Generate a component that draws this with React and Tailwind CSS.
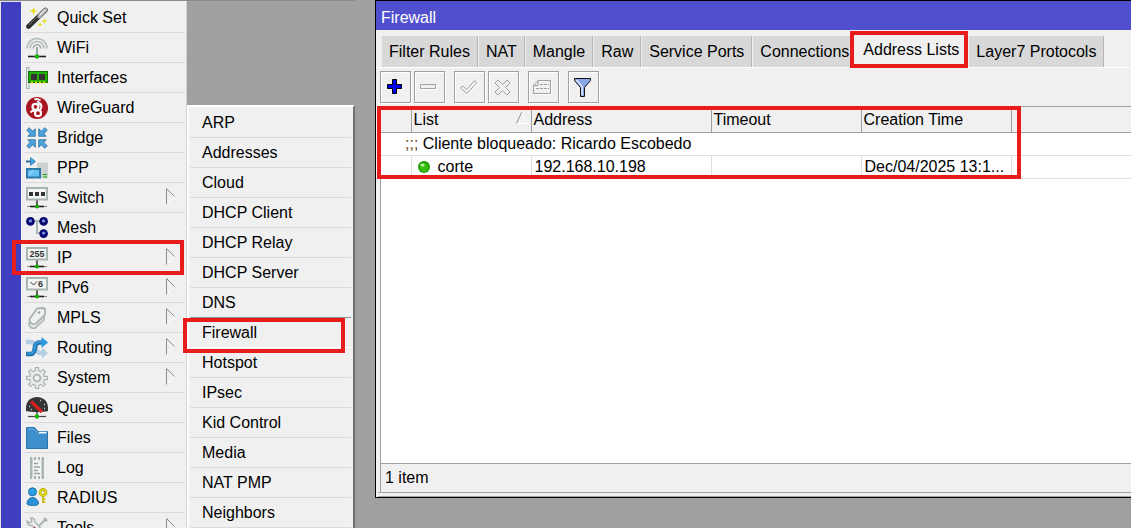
/**
 * RouterOS style desktop: main menu, IP submenu and the Firewall window
 */

import React, { useState } from 'react';

const Icon = ({ children, className = 'h-[22px] w-[22px]' }) => (
  <svg viewBox="0 0 22 22" className={`shrink-0 ${className}`} fill="none" aria-hidden="true">
    {children}
  </svg>
);

// Network plug drawn below several of the icons
const Plug = () => (
  <>
    <path d="M11 13v6" stroke="#222" strokeWidth="1.4" />
    <path d="M1 19.5h20" stroke="#888" strokeWidth="1" />
    <path d="M4 19.5h14" stroke="#222" strokeWidth="1.6" />
    <circle cx="11" cy="19.5" r="2.1" fill="#18a800" />
  </>
);

const Screen = ({ children }) => (
  <Icon>
    <Plug />
    <rect x="1" y="1" width="20" height="11.5" fill="#f4f6f6" stroke="#a8b4b2" strokeWidth="2" />
    {children}
  </Icon>
);

const QuickSetIcon = () => (
  <Icon>
    <path d="M2.5 19.5 19.5 3" stroke="#2b2b2b" strokeWidth="4.6" strokeLinecap="round" />
    <path d="M13 9.5 19.5 3" stroke="#b8b8b8" strokeWidth="3.6" strokeLinecap="round" />
    <path d="M3 18 12.5 8.8" stroke="#777" strokeWidth="1" />
    <path d="M13.5 8 19 2.6" stroke="#f0f0f0" strokeWidth="1.2" />
    <path d="m7.5 0 1.1 3 3 1-3 1.1-1.1 3-1.1-3-3-1.1 3-1z" fill="#e6dc12" />
    <path d="m18.5 11 .8 2.2 2.2.8-2.2.8-.8 2.2-.8-2.2-2.2-.8 2.2-.8z" fill="#e6dc12" />
    <path d="m14 15 .7 1.9 1.9.7-1.9.7-.7 1.9-.7-1.9-1.9-.7 1.9-.7z" fill="#e6dc12" />
  </Icon>
);

const WifiIcon = () => (
  <Icon>
    <path d="M1 11.5a10 10 0 1 1 20 0" stroke="#b4bfbd" strokeWidth="1.6" />
    <path d="M4 11.5a7 7 0 1 1 14 0" stroke="#b4bfbd" strokeWidth="1.6" />
    <path d="M7.2 11.5a3.8 3.8 0 1 1 7.6 0" stroke="#9facaa" strokeWidth="1.6" />
    <path d="M11 10v9" stroke="#9aa8a5" strokeWidth="2" />
    <path d="M2 19.5h18" stroke="#222" strokeWidth="1.6" />
    <circle cx="11" cy="19.5" r="2.2" fill="#18b400" />
  </Icon>
);

const InterfacesIcon = () => (
  <Icon>
    <rect x=".5" y=".5" width="2.6" height="21" fill="#e3e8e7" stroke="#a8b4b2" />
    <rect x="2.5" y="4.5" width="19" height="11" fill="#20b000" stroke="#157000" />
    <rect x="5" y="7" width="6" height="6" fill="#333" />
    <rect x="13" y="7" width="6" height="6" fill="#333" />
    <path d="M5 15.5h15" stroke="#e8dc10" strokeWidth="2" strokeDasharray="2 2" />
  </Icon>
);

const WireGuardIcon = () => (
  <Icon>
    <circle cx="11" cy="11" r="11" fill="#a81420" />
    <path d="M8.5 2.5c2.5-1.3 4.500 0 6 1M11 4.500c2 .5 3 2 1.500 3.300" stroke="#fff" strokeWidth="2" />
    <circle cx="9.500" cy="9.800" r="3" stroke="#fff" strokeWidth="2.2" />
    <circle cx="12" cy="16.200" r="3" stroke="#fff" strokeWidth="2.2" />
    <path d="M13 6c3.500 1.500 3 6 0 7.500M4.500 15.500c1-1.500 3-2 5-1.500" stroke="#fff" strokeWidth="2" />
  </Icon>
);

const BridgeIcon = () => (
  <Icon>
    {[0, 90, 180, 270].map((angle) => (
      <path
        key={angle}
        transform={`rotate(${angle} 11 11)`}
        d="M.7 3.2 3.2.7l3.3 3.4L9.3 1.8V9.3H1.8l2.4-2.8z"
        fill="#4aa3dc"
        stroke="#2a6f9e"
        strokeWidth=".8"
      />
    ))}
  </Icon>
);

const PppIcon = () => (
  <Icon>
    <path d="M11 5.5h11v16H15V11h-4z" fill="#ccd2d1" />
    <path d="M17 17.5h4M17 20h4" stroke="#18a800" />
    <path d="M0 4.5h6" stroke="#2f6a94" strokeWidth="2" />
    <path d="M4.500.5 9.500 4.500l-5 4z" fill="#35a4e8" stroke="#2f6a94" strokeWidth=".6" />
    <rect x="1" y="12" width="13" height="8.500" fill="#64c0f2" stroke="#2d78aa" strokeWidth="2" />
    <path d="M2.500 18 8 13" stroke="#93d6f8" strokeWidth="1.500" />
  </Icon>
);

const SwitchIcon = () => (
  <Screen>
    <path d="M3 5h4v4H3zM9 5h4v4H9zM15 5h4v4h-4z" fill="#333" />
  </Screen>
);

const MeshIcon = () => (
  <Icon>
    <path d="M4 4h13M11 4v12h6" stroke="#a8b8b6" strokeWidth="2" />
    {[[4.4, 4.4], [17.6, 4.4], [17.6, 16.6]].map(([cx, cy]) => (
      <g key={`${cx}-${cy}`}>
        <circle cx={cx} cy={cy} r="4.3" fill="#050570" />
        <circle cx={cx} cy={cy - 0.5} r="1.7" fill="#7a8ee0" />
      </g>
    ))}
  </Icon>
);

const IpIcon = () => (
  <Screen>
    <text x="11" y="10" textAnchor="middle" fontSize="9" fontWeight="700" fontFamily="Liberation Sans, sans-serif" fill="#333">255</text>
  </Screen>
);

const Ipv6Icon = () => (
  <Screen>
    <path d="m4.500 5 3 3 3.500-3.500" stroke="#333" />
    <text x="14.500" y="10" textAnchor="middle" fontSize="9" fontWeight="700" fontFamily="Liberation Sans, sans-serif" fill="#333">6</text>
  </Screen>
);

const MplsIcon = () => (
  <Icon>
    <path d="m4 14-1 3c0 3 3 5 6 4l9-8V9" fill="#e4e8e7" stroke="#a8b4b2" strokeWidth="1.6" />
    <path d="M11 1.5 17.5 1l1.5 1v6l-9 8.500c-4 2-7-1-6.500-4.500z" fill="#eef1f0" stroke="#a8b4b2" strokeWidth="1.8" />
    <circle cx="13" cy="5.500" r="1.300" fill="#98a6a3" />
    <path d="M11.500 15 15 11.500" stroke="#a8b4b2" />
  </Icon>
);

const RoutingIcon = () => (
  <Icon>
    <path d="M0 5h5.500c5 0 3 11 8.500 11h3" stroke="#b4cfe4" strokeWidth="4.400" />
    <path d="m16 10.500 6 5.500-6 5.500z" fill="#b4cfe4" />
    <path d="M0 17h5C11 17 6.500 5.500 13 5.500h4" stroke="#1f6ea8" strokeWidth="4.600" />
    <path d="M1 16.500h4C10.500 16.500 6.500 5 13 5h3" stroke="#379ada" strokeWidth="2.200" />
    <path d="m15.500 0 6.500 5.500-6.500 5.500z" fill="#2b9ce0" />
  </Icon>
);

const SystemIcon = () => (
  <Icon>
    {[0, 45, 90, 135].map((angle) => (
      <path key={angle} transform={`rotate(${angle} 11 11)`} d="M11 0v22" stroke="#a8b4b2" strokeWidth="4.400" />
    ))}
    <circle cx="11" cy="11" r="7.500" fill="#e9eceb" stroke="#a8b4b2" strokeWidth="1.200" />
    {[0, 45, 90, 135].map((angle) => (
      <path key={angle} transform={`rotate(${angle} 11 11)`} d="M11 1.200v19.600" stroke="#e9eceb" strokeWidth="2.200" />
    ))}
    <circle cx="11" cy="11" r="3.400" fill="#f0f0f0" stroke="#a8b4b2" strokeWidth="1.800" />
  </Icon>
);

const QueuesIcon = () => (
  <Icon>
    <path d="M11 13v6" stroke="#555" strokeWidth="1.500" />
    <path d="M2 19.500h18" stroke="#444" strokeWidth="1.200" />
    <path d="M0 14C-1 5 4 0 11 0s12 5 11 14c-5 1.500-17 1.500-22 0z" fill="#353535" />
    <path d="M3 9.500h1M6 4.500h1M14 3.500h1M18 7.500h1M18 11.500h1M5 12.500h1" stroke="#c8c8c8" strokeWidth="1.500" />
    <path d="M5 4.500 16 15" stroke="#d82020" strokeWidth="3.200" />
    <circle cx="11" cy="19.500" r="2.200" fill="#18b400" />
  </Icon>
);

const FilesIcon = () => (
  <Icon>
    <path d="M.5.500h8L12 4.500h9.500v17H.500z" fill="#3d8ecb" stroke="#2b74aa" />
    <path d="M2 2h6l4 4.500h8.500" stroke="#66aee0" />
    <path d="M13 5.500h7.500" stroke="#fff" strokeWidth="1.500" />
  </Icon>
);

const LogIcon = () => (
  <Icon>
    <path d="M5.500 1.500v19h11v-19" fill="#f2f4f4" />
    <path d="M5.300 1v20M16.700 1v20" stroke="#a8b4b2" strokeWidth="2.400" />
    <path d="M4 1.500h14M4 20.500h14" stroke="#a8b4b2" strokeWidth="3" strokeDasharray="2 2" />
    <path d="M8 6.500h4M8 10h6M8 13.500h4M8 16.500h6" stroke="#98a6a3" strokeWidth="1.500" />
  </Icon>
);

const RadiusIcon = () => (
  <Icon>
    <circle cx="6.500" cy="4.800" r="4" fill="#2ca0e4" stroke="#1d6ea5" />
    <path d="M1 17c0-4 2.500-6.500 5.500-6.500s6 2.500 6 6.500c-2 2-9.500 2-11.500 0z" fill="#2b93d6" stroke="#1d6ea5" />
    <circle cx="17" cy="5.500" r="3" stroke="#b8aa00" strokeWidth="2.800" />
    <circle cx="17" cy="5.500" r="3" stroke="#eadf20" strokeWidth="1.200" />
    <path d="M17 9v7M17 12h2.500M17 15h2.500" stroke="#c8ba00" strokeWidth="1.700" />
  </Icon>
);

const ToolsIcon = () => (
  <Icon>
    <path d="M20 2 9 13M2 20l9-9" stroke="#a8b4b2" strokeWidth="2" />
    <path d="m18 1 3 3" stroke="#a8b4b2" strokeWidth="2.500" />
    <path d="M5 1c2 0 4 1 4 4l11 12-2.500 2.500L6 8.500C3 9 1 7 1 4l3 2 2-2z" fill="#edf0ef" stroke="#a8b4b2" strokeWidth="1.400" />
    <path d="M4 17.500 10 11" stroke="#b01828" strokeWidth="4" />
  </Icon>
);

const MENU = [
  { label: 'Quick Set', icon: QuickSetIcon },
  { label: 'WiFi', icon: WifiIcon },
  { label: 'Interfaces', icon: InterfacesIcon },
  { label: 'WireGuard', icon: WireGuardIcon },
  { label: 'Bridge', icon: BridgeIcon },
  { label: 'PPP', icon: PppIcon },
  { label: 'Switch', icon: SwitchIcon, sub: true },
  { label: 'Mesh', icon: MeshIcon },
  { label: 'IP', icon: IpIcon, sub: true },
  { label: 'IPv6', icon: Ipv6Icon, sub: true },
  { label: 'MPLS', icon: MplsIcon, sub: true },
  { label: 'Routing', icon: RoutingIcon, sub: true },
  { label: 'System', icon: SystemIcon, sub: true },
  { label: 'Queues', icon: QueuesIcon },
  { label: 'Files', icon: FilesIcon },
  { label: 'Log', icon: LogIcon },
  { label: 'RADIUS', icon: RadiusIcon },
  { label: 'Tools', icon: ToolsIcon, sub: true },
];

const IP_MENU = [
  'ARP', 'Addresses', 'Cloud', 'DHCP Client', 'DHCP Relay', 'DHCP Server', 'DNS',
  'Firewall', 'Hotspot', 'IPsec', 'Kid Control', 'Media', 'NAT PMP', 'Neighbors',
];

const TABS = [
  'Filter Rules', 'NAT', 'Mangle', 'Raw', 'Service Ports', 'Connections', 'Address Lists', 'Layer7 Protocols',
];

// Red frame around a highlighted area
const Highlight = ({ className }) => (
  <span className={`pointer-events-none absolute z-10 border-4 border-[#e81c1c] ${className}`} />
);

const MainMenu = () => (
  <nav className="w-[166px] shrink-0 border-r border-[#d4d4d4] bg-[#f0f0f0] pt-0.5 pr-px pl-0.5">
    {MENU.map(({ label, icon: ItemIcon, sub }) => (
      <button
        key={label}
        type="button"
        className={`relative flex h-[30px] w-full items-center border-b pt-px pl-[3px] text-left ${
          label === 'IP' ? 'border-white' : 'border-[#dadada]'
        }`}
      >
        <ItemIcon />
        <span className="ml-[9px] flex-1">{label}</span>
        {sub && (
          <svg viewBox="0 0 9 17" className="mr-2.5 mb-1 h-[17px] w-[9px]" fill="none" aria-hidden="true">
            <path d="m1 16 7.500-7.500" stroke="#fff" />
            <path d="M.5 16.500V.500l8 8" stroke="#8c8c8c" />
          </svg>
        )}
        {label === 'IP' && <Highlight className="-top-[3px] right-px -bottom-[3px] -left-[11px]" />}
      </button>
    ))}
  </nav>
);

const IpMenu = () => (
  <nav className="mt-[104px] w-[168px] shrink-0 border-t-2 border-r-2 border-l-2 border-t-white border-r-[#707070] border-l-white bg-[#f0f0f0] pt-px pr-0.5 pl-px">
    {IP_MENU.map((label) => (
      <button
        key={label}
        type="button"
        className={`relative flex h-[30px] w-full items-center border-b pt-px pl-3 text-left ${
          label === 'DNS' ? 'border-[#909090]' : label === 'Firewall' ? 'border-white' : 'border-[#dadada]'
        }`}
      >
        {label}
        {label === 'Firewall' && <Highlight className="top-0 right-1.5 -bottom-[6px] -left-[7px]" />}
      </button>
    ))}
  </nav>
);

const Tabs = ({ active, onChange }) => (
  <div role="tablist" className="flex h-[38px] shrink-0 items-end gap-px border-b border-white pl-1.5 whitespace-nowrap">
    {TABS.map((label) => (
      <button
        key={label}
        type="button"
        role="tab"
        aria-selected={label === active}
        onClick={() => onChange(label)}
        className={
          label === active
            ? 'relative -ml-2 h-[35px] bg-[#f0f0f0] pr-[9px] pl-[13px]'
            : 'relative h-[31px] border-r border-[#b4b4b4] bg-[#d8d8d8] px-[7px]'
        }
      >
        {label}
        {label === 'Address Lists' && <Highlight className="-top-px right-0 -bottom-px left-0" />}
      </button>
    ))}
  </div>
);

const ToolButton = ({ label, children }) => (
  <button
    type="button"
    aria-label={label}
    className="flex h-8 w-[31px] items-center justify-center border border-[#a0a0a0] bg-[#f0f0f0] shadow-[inset_1px_1px_0_#fff,1px_1px_0_#fff]"
  >
    {children}
  </button>
);

const Toolbar = () => (
  <div className="flex shrink-0 gap-[9px] pt-[3px] pb-[3px] pl-1">
    <div className="flex gap-[3px]">
      <ToolButton label="Add">
        <svg viewBox="0 0 16 16" className="mr-0.5 h-4 w-4" aria-hidden="true">
          <path d="M5.500.500h4v5h5v4h-5v5h-4v-5h-5v-4h5z" fill="#0000f0" stroke="#000" />
        </svg>
      </ToolButton>
      <ToolButton label="Remove">
        <svg viewBox="0 0 17 6" className="mr-0.5 h-1.5 w-[17px]" aria-hidden="true">
          <path d="M.5.500h15v4H.500z" fill="#f0f0f0" stroke="#a0a0a0" />
          <path d="M1 5.500h15.500V1" fill="none" stroke="#fff" />
        </svg>
      </ToolButton>
    </div>
    <div className="flex gap-[3px]">
      <ToolButton label="Enable">
        <svg viewBox="0 0 18 15" className="mr-0.5 h-[15px] w-[18px]" fill="none" aria-hidden="true">
          <path d="m1 8.500 2-2 4 3.500L15 1l2 2-9.500 11z" stroke="#fff" transform="translate(.7 .7)" />
          <path d="m.7 8 2-2 4 3.500L14.700.700l2 2L7 13.500z" stroke="#a0a0a0" />
        </svg>
      </ToolButton>
      <ToolButton label="Disable">
        <svg viewBox="0 0 17 17" className="mr-0.5 h-[17px] w-[17px]" fill="none" aria-hidden="true">
          <path d="m1 4 3-3 4.500 4.500L13 1l3 3-4.500 4.500L16 13l-3 3-4.500-4.500L4 16l-3-3 4.500-4.500z" stroke="#a0a0a0" />
        </svg>
      </ToolButton>
    </div>
    <ToolButton label="Comment">
      <svg viewBox="0 0 19 15" className="mr-0.5 h-[15px] w-[19px]" fill="none" aria-hidden="true">
        <path d="M1.500 14.500h17V1.500" stroke="#fff" />
        <path d="M.5 5.500 5 .500h12.500v13H.500zM.500 5.500H5v-5" stroke="#a0a0a0" />
        <path d="M7 4.500h9M3 8.500h13" stroke="#a0a0a0" strokeDasharray="3 1" />
      </svg>
    </ToolButton>
    <ToolButton label="Filter">
      <svg viewBox="0 0 18 19" className="mr-0.5 h-[19px] w-[18px]" aria-hidden="true">
        <path d="M.5.500h16v2L10.500 9.500v9h-4v-9L.500 2.500z" fill="#86a4e6" stroke="#111" />
        <path d="M2.500 2 8 8.500V17" fill="none" stroke="#e4ecff" strokeWidth="1.500" />
      </svg>
    </ToolButton>
  </div>
);

const AddressTable = () => (
  <div className="relative">
    <table className="w-full table-fixed border-collapse text-left whitespace-nowrap">
      <colgroup>
        <col className="w-[30px]" />
        <col className="w-[120px]" />
        <col className="w-[180px]" />
        <col className="w-[150px]" />
        <col className="w-[150px]" />
        <col />
      </colgroup>
      <thead>
        <tr className="h-[25px] border-b border-[#a0a0a0] bg-[#f0f0f0] leading-[22px] [&>th]:p-0 [&>th]:pt-0.5 [&>th]:pl-0.5 [&>th]:font-normal">
          <th className="border-r border-[#a0a0a0]" />
          <th className="border-r border-[#a0a0a0]">
            <span className="flex items-center justify-between">
              List
              <svg viewBox="0 0 11 12" className="mr-1 mb-1 h-3 w-[11px]" fill="none" aria-hidden="true">
                <path d="m5.500 1 5 10.500H.500" stroke="#fff" />
                <path d="M.5 11.500 5.500.500" stroke="#909090" />
              </svg>
            </span>
          </th>
          <th className="border-r border-[#a0a0a0]">Address</th>
          <th className="border-r border-[#a0a0a0]">Timeout</th>
          <th className="border-r border-[#a0a0a0]">Creation Time</th>
          <th />
        </tr>
      </thead>
      <tbody>
        <tr className="h-[23px] border-b border-[#e0e0e0] leading-[22px]">
          <td colSpan={6} className="p-0 pl-6">
            <span className="text-[#6b4a1c]">;;;</span> Cliente bloqueado: Ricardo Escobedo
          </td>
        </tr>
        <tr className="h-[23px] border-b border-[#e0e0e0] leading-[22px] [&>td]:p-0 [&>td]:pl-[3px]">
          <td className="border-r border-[#e0e0e0]" />
          <td className="border-r border-[#e0e0e0]">
            <span className="flex items-center gap-2 pl-[3px]">
              <svg viewBox="0 0 12 12" className="h-3 w-3" aria-hidden="true">
                <circle cx="6" cy="6" r="6" fill="#1f9a00" />
                <circle cx="6" cy="6.500" r="4.500" fill="#35bd12" />
                <ellipse cx="4.500" cy="4" rx="2.200" ry="1.600" fill="#b6f0a4" />
              </svg>
              corte
            </span>
          </td>
          <td className="border-r border-[#e0e0e0]">192.168.10.198</td>
          <td className="border-r border-[#e0e0e0]" />
          <td className="border-r border-[#e0e0e0]">Dec/04/2025 13:1...</td>
          <td />
        </tr>
      </tbody>
    </table>
    <Highlight className="-top-px bottom-0 -left-[4px] w-[644px]" />
  </div>
);

const FirewallWindow = () => {
  const [tab, setTab] = useState('Address Lists');

  return (
    <main className="mb-[30px] ml-5 flex min-w-0 flex-1 flex-col border-b border-l border-black bg-[#f0f0f0]">
      <header className="h-[30px] shrink-0 border-t border-black bg-[#504fcd] pl-[5px] leading-[33px] text-white">
        <h1>Firewall</h1>
      </header>
      <Tabs active={tab} onChange={setTab} />
      <Toolbar />
      <section className="ml-1 flex flex-1 flex-col border-t border-l border-[#a0a0a0] bg-white">
        <div className="flex-1">
          <AddressTable />
        </div>
        <footer className="h-[29px] border-t border-[#a0a0a0] bg-[#f0f0f0] pl-1 leading-[27px]">1 item</footer>
      </section>
      <div className="ml-0.5 h-[5px] shrink-0 border-t border-b border-[#a0a0a0]" />
    </main>
  );
};

const App = () => (
  <div className="flex h-screen overflow-hidden bg-[#a0a0a0] font-['Liberation_Sans',Arial,sans-serif] text-base leading-6 text-black">
    <div className="flex border-t border-[#8a8a8a]">
      <div className="w-[21px] shrink-0 border-t border-l border-[#e4e4e4] bg-[#403ec0]" />
      <MainMenu />
      <IpMenu />
    </div>
    <FirewallWindow />
  </div>
);

export default App;
